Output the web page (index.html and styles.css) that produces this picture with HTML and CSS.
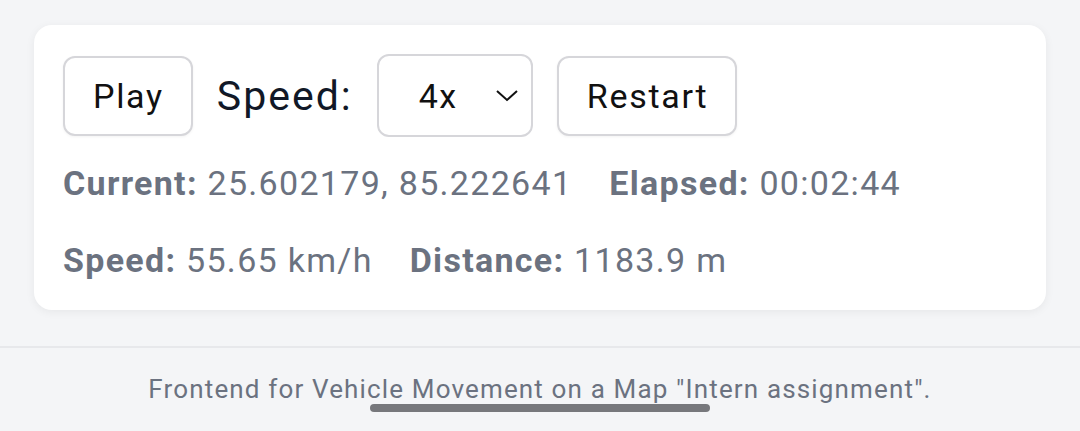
FILE: index.html
```html
<!DOCTYPE html>
<html>
<head>
<meta charset="utf-8">
<link rel="stylesheet" href="styles.css">
</head>
<body>
<main class="page">
  <section class="card">
    <div class="controls">
      <button class="btn">Play</button>
      <span class="speed-label">Speed:</span>
      <div class="select">
        <span class="select-value">4x</span>
        <svg class="chev" width="24" height="14" viewBox="0 0 24 14"><path d="M2 2 L12 11 L22 2" fill="none" stroke="#111" stroke-width="2"/></svg>
      </div>
      <button class="btn">Restart</button>
    </div>
    <div class="stats">
      <p class="row"><span class="item"><b>Current:</b> 25.602179, 85.222641</span><span class="item"><b>Elapsed:</b> 00:02:44</span></p>
      <p class="row"><span class="item"><b>Speed:</b> 55.65 km/h</span><span class="item"><b>Distance:</b> 1183.9 m</span></p>
    </div>
  </section>
</main>
<footer class="footer">
  <p class="footer-text">Frontend for Vehicle Movement on a Map "Intern assignment".</p>
  <div class="pill"></div>
</footer>
</body>
</html>
```
FILE: styles.css
```css
html, body {
  margin: 0;
  padding: 0;
  background: #f4f5f7;
  font-family: Roboto, "Liberation Sans", sans-serif;
  height: 431px;
  overflow: hidden;
}
.page {
  padding: 25px 34px 36px 34px;
}
.card {
  background: #fff;
  border-radius: 18px;
  box-shadow: 0 2px 10px rgba(0,0,0,0.06);
  padding: 29px 29px 0 29px;
  box-sizing: border-box;
  height: 285px;
}
.controls {
  display: flex;
  align-items: center;
  gap: 24px;
}
.btn {
  font-family: Roboto, sans-serif;
  font-size: 34px;
  letter-spacing: 1.7px;
  color: #111;
  background: #fff;
  border: 2px solid #d6d6da;
  border-radius: 12px;
  height: 80px;
  padding: 0 27px 0 28px;
  box-shadow: 0 1px 3px rgba(0,0,0,0.05);
}
.speed-label {
  font-size: 41px;
  letter-spacing: 2px;
  color: #111827;
}
.select {
  display: flex;
  align-items: center;
  box-sizing: border-box;
  width: 156px;
  height: 83px;
  border: 2px solid #d6d6da;
  border-radius: 12px;
  padding: 0 12px 0 40px;
}
.select-value {
  font-size: 34px;
  letter-spacing: 1.5px;
  color: #111;
  flex: 1;
}
.chev { display: block; }
.stats { margin-top: 21px; }
.row {
  margin: 0;
  font-size: 34px;
  letter-spacing: 1.3px;
  color: #6b7280;
  line-height: 50px;
  display: flex;
  gap: 37px;
}
.row + .row { margin-top: 27px; }
.row b { font-weight: 700; }
.footer {
  border-top: 2px solid #e7e8eb;
  position: relative;
  text-align: center;
}
.footer-text {
  margin: 26px 0 0 0;
  font-size: 26px;
  letter-spacing: 1.15px;
  color: #6b7280;
}
.pill {
  position: absolute;
  left: 370px;
  top: 56px;
  width: 340px;
  height: 8px;
  border-radius: 4px;
  background: #77787c;
}
```
